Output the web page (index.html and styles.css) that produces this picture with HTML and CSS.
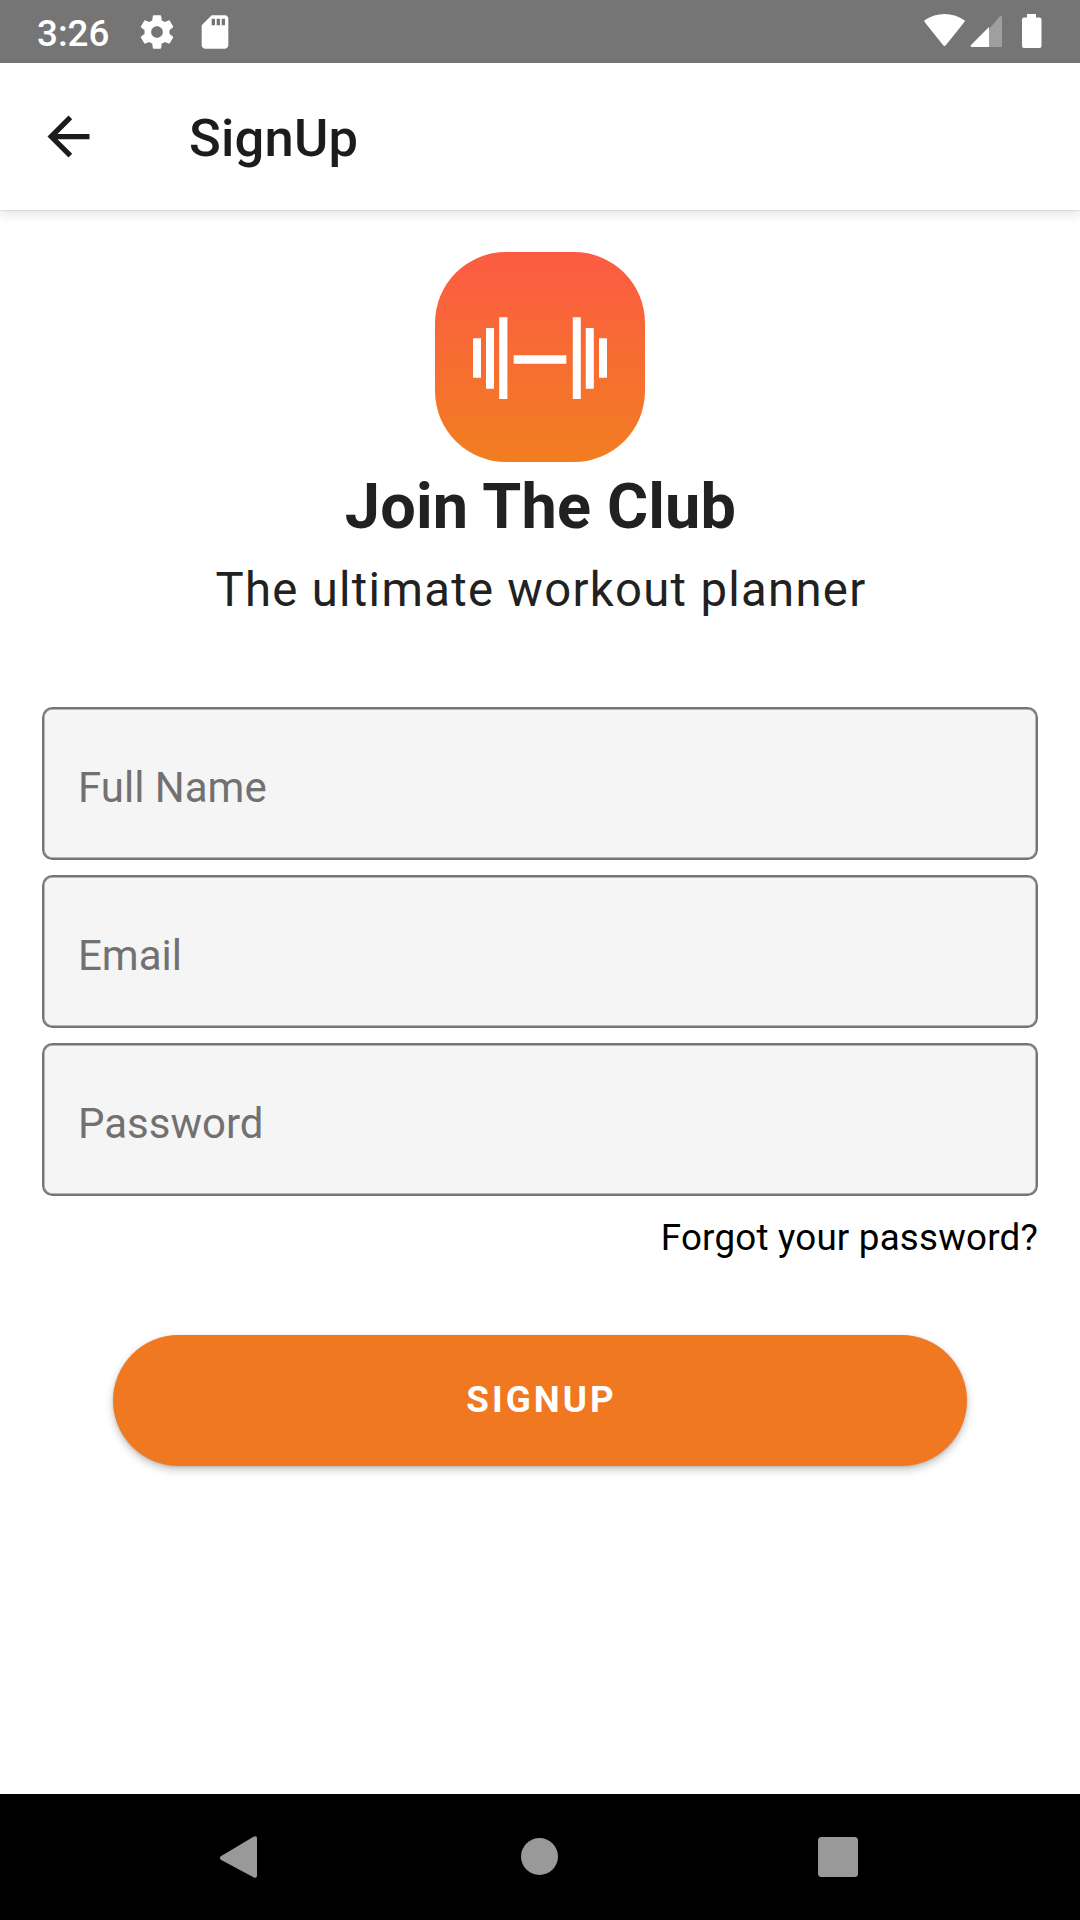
FILE: index.html
```html
<!DOCTYPE html>
<html lang="en">
<head>
<meta charset="utf-8">
<title>SignUp</title>
<link rel="stylesheet" href="styles.css">
</head>
<body>
<div class="screen">
  <header class="status-bar">
    <span class="clock">3:26</span>
    <svg class="gear" viewBox="0 0 24 24"><path d="M19.43 12.98c.04-.32.07-.64.07-.98s-.03-.66-.07-.98l2.11-1.65c.19-.15.24-.42.12-.64l-2-3.46c-.12-.22-.39-.3-.61-.22l-2.49 1c-.52-.4-1.08-.73-1.69-.98l-.38-2.65A.488.488 0 0 0 14 2h-4c-.25 0-.46.18-.49.42l-.38 2.65c-.61.25-1.17.59-1.69.98l-2.49-1c-.23-.09-.49 0-.61.22l-2 3.46c-.13.22-.07.49.12.64l2.11 1.65c-.04.32-.07.65-.07.98s.03.66.07.98l-2.11 1.65c-.19.15-.24.42-.12.64l2 3.46c.12.22.39.3.61.22l2.49-1c.52.4 1.08.73 1.69.98l.38 2.65c.03.24.24.42.49.42h4c.25 0 .46-.18.49-.42l.38-2.65c.61-.25 1.17-.59 1.69-.98l2.49 1c.23.09.49 0 .61-.22l2-3.46c.12-.22.07-.49-.12-.64l-2.11-1.65zM12 15.5c-1.93 0-3.5-1.57-3.5-3.5s1.57-3.5 3.5-3.5 3.5 1.57 3.5 3.5-1.57 3.5-3.5 3.5z"/></svg>
    <svg class="sd-card" viewBox="0 0 24 24"><path d="M18 2h-8L4.02 8 4 20c0 1.1.9 2 2 2h12c1.1 0 2-.9 2-2V4c0-1.1-.9-2-2-2zm-6 6h-2V4h2v4zm3 0h-2V4h2v4zm3 0h-2V4h2v4z"/></svg>
    <svg class="signals" viewBox="0 0 120 36">
      <path d="M.8 8.2Q-.4 7 .9 6.1C12.500-1.900 28.500-1.900 40.100 6.100Q41.400 7 40.200 8.200L21.800 31.200Q20.500 32.700 19.200 31.200Z"/>
      <path class="dim" d="M65 15L75.300 3Q78 .8 78 3.500V31.500Q78 33 76.500 33H65Z"/>
      <path d="M65 13V33H48Q45.600 32.500 47.300 30.700Z"/>
      <path d="M103 0H112V3.500H115.500Q117.500 3.500 117.500 5.500V32Q117.500 34 115.500 34H100Q98 34 98 32V5.500Q98 3.500 100 3.500H103Z"/>
    </svg>
  </header>
  <div class="app-bar">
    <svg class="back" viewBox="0 0 24 24"><path d="M20 11H7.830l5.590-5.590L12 4l-8 8 8 8 1.410-1.410L7.830 13H20v-2z"/></svg>
    <span class="title">SignUp</span>
  </div>
  <main class="content">
    <svg class="logo" viewBox="0 0 210 210">
      <defs><linearGradient id="flame" x1="0" y1="0" x2="0" y2="1"><stop offset="0" stop-color="#fc5b43"/><stop offset="1" stop-color="#f27e21"/></linearGradient></defs>
      <rect width="210" height="210" rx="71" fill="url(#flame)"/>
      <path fill="#fff" d="M38 86.300h8v39.400h-8zM51 76h8v60.700h-8zM64.200 65.300h8.200V147h-8.200zM78.700 103.300h52.600v8.400H78.700zM137.800 65.300h8V147h-8zM150.800 76h8v60.700h-8zM164 86.300h8v39.400h-8z"/>
    </svg>
    <h1 class="headline">Join The Club</h1>
    <p class="tagline">The ultimate workout planner</p>
    <form class="fields">
      <input class="field" type="text" placeholder="Full Name">
      <input class="field" type="text" placeholder="Email">
      <input class="field" type="password" placeholder="Password">
    </form>
    <a class="forgot">Forgot your password?</a>
    <button class="submit" type="button">SIGNUP</button>
  </main>
  <nav class="nav-bar">
    <svg class="nav-icon" viewBox="0 0 44 44"><path d="M2.800 24.700Q1 23 2.800 21.300L35.500 1.800Q39 .2 39 3.500V40.500Q39 43.800 35.500 42.200Z"/></svg>
    <svg class="nav-icon" viewBox="0 0 44 44"><circle cx="22.500" cy="21.500" r="18.500"/></svg>
    <svg class="nav-icon" viewBox="0 0 44 44"><rect x="2" y="2" width="40" height="40" rx="3.500"/></svg>
  </nav>
</div>
</body>
</html>
```
FILE: styles.css
```css
* { box-sizing: border-box; }

body {
  margin: 0;
  font-family: Roboto, "Liberation Sans", sans-serif;
  background: #fff;
}

.screen {
  display: flex;
  flex-direction: column;
  width: 1080px;
  height: 1920px;
  overflow: hidden;
}

.status-bar {
  display: flex;
  align-items: center;
  height: 63px;
  padding: 0 36px 0 37px;
  background: #757575;
  color: #fff;
  fill: #fff;
}

.clock {
  width: 100px;
  padding-top: 4px;
  font-size: 36.75px;
  font-weight: 500;
  line-height: 43px;
}

.gear { width: 40px; height: 40px; }
.sd-card { width: 40px; height: 40px; margin-left: 18px; }
.signals { width: 120px; height: 36px; margin: 1px 0 0 auto; }
.dim { fill: #9f9f9f; }

.app-bar {
  display: flex;
  align-items: center;
  height: 147px;
  padding-left: 37px;
  background: #fff;
  box-shadow: 0 1px 1px rgba(0, 0, 0, .08), 0 5px 10px rgba(0, 0, 0, .1);
  color: #1c1c1e;
}

.back { width: 63px; height: 63px; fill: #1c1c1e; }

.title {
  margin-left: 89px;
  padding-top: 2px;
  font-size: 52.5px;
  font-weight: 500;
  letter-spacing: .2px;
}

.content {
  display: flex;
  flex: 1;
  flex-direction: column;
  align-items: center;
  padding: 42px 42px 0;
  color: #212121;
}

.logo { width: 210px; height: 210px; }

.headline {
  margin: 3px 0 0;
  padding-left: 1px;
  font-size: 63px;
  font-weight: 700;
  line-height: 84px;
  letter-spacing: .15px;
}

.tagline {
  margin: 11px 0 0;
  padding-left: 2px;
  font-size: 47.25px;
  line-height: 60px;
  letter-spacing: 1.31px;
}

.fields {
  display: flex;
  flex-direction: column;
  gap: 15px;
  width: 100%;
  margin-top: 87px;
}

.field {
  width: 100%;
  height: 153px;
  padding: 7px 34px 0;
  border: 2px solid #757575;
  border-radius: 10.5px;
  background: #f5f5f5;
  box-shadow: inset 0 0 0 .7px #a0a0a0;
  font-family: inherit;
  font-size: 42px;
}

.field::placeholder { color: #717171; opacity: 1; }

.forgot {
  align-self: flex-end;
  margin-top: 20px;
  color: #000;
  font-size: 36.75px;
  line-height: 44px;
  letter-spacing: .2px;
}

.submit {
  width: 854px;
  height: 131px;
  margin-top: 75px;
  padding: 0 0 2px 3px;
  border: 0;
  border-radius: 66px;
  background: #f07820;
  box-shadow: 0 4px 8px rgba(0, 0, 0, .22), 0 1px 3px rgba(0, 0, 0, .12);
  color: #fff;
  font-family: inherit;
  font-size: 36.75px;
  font-weight: 700;
  letter-spacing: 3.05px;
}

.nav-bar {
  display: flex;
  justify-content: space-between;
  height: 126px;
  padding: 41px 220px 0 218px;
  background: #000;
  fill: #999;
}

.nav-icon { width: 44px; height: 44px; }
```
